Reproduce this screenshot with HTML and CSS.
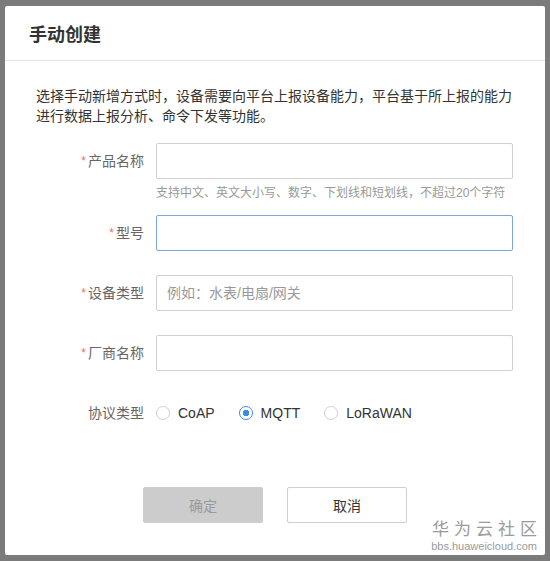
FILE: index.html
```html
<!DOCTYPE html>
<html lang="zh-CN">
<head>
    <meta charset="UTF-8">
    <meta name="viewport" content="width=device-width, initial-scale=1.0">
    <title>手动创建</title>
    <link rel="stylesheet" href="styles.css">
</head>
<body>
    <div class="dialog">
        <div class="dialog-header">
            <h2 class="dialog-title">手动创建</h2>
        </div>

        <div class="dialog-body">
            <p class="dialog-desc">选择手动新增方式时，设备需要向平台上报设备能力，平台基于所上报的能力进行数据上报分析、命令下发等功能。</p>

            <div class="form-item has-hint">
                <label class="form-label"><span class="required">*</span>产品名称</label>
                <div class="form-control">
                    <input class="text-input" type="text">
                    <div class="form-hint">支持中文、英文大小写、数字、下划线和短划线，不超过20个字符</div>
                </div>
            </div>

            <div class="form-item">
                <label class="form-label"><span class="required">*</span>型号</label>
                <div class="form-control">
                    <input class="text-input is-focus" type="text">
                </div>
            </div>

            <div class="form-item">
                <label class="form-label"><span class="required">*</span>设备类型</label>
                <div class="form-control">
                    <input class="text-input" type="text" placeholder="例如：水表/电扇/网关">
                </div>
            </div>

            <div class="form-item">
                <label class="form-label"><span class="required">*</span>厂商名称</label>
                <div class="form-control">
                    <input class="text-input" type="text">
                </div>
            </div>

            <div class="form-item">
                <label class="form-label">协议类型</label>
                <div class="form-control radio-group">
                    <label class="radio"><span class="radio-dot"></span>CoAP</label>
                    <label class="radio checked"><span class="radio-dot"></span>MQTT</label>
                    <label class="radio"><span class="radio-dot"></span>LoRaWAN</label>
                </div>
            </div>
        </div>

        <div class="dialog-footer">
            <button class="btn btn-primary" disabled>确定</button>
            <button class="btn btn-default">取消</button>
        </div>

        <!-- forum watermark -->
        <div class="watermark">
            <div class="watermark-name">华为云社区</div>
            <div class="watermark-url">bbs.huaweicloud.com</div>
        </div>
    </div>
</body>
</html>
```

FILE: styles.css
```css
/* Basic Styles */
body {
    margin: 0;
    padding: 6px 5px;
    background-color: #7b7b7b;
    font-family: "Liberation Sans", "Noto Sans CJK SC", sans-serif;
    font-size: 14px;
    color: #333;
}

/* Dialog */
.dialog {
    position: relative;
    width: 540px;
    height: 549px;
    background-color: #fff;
    border-radius: 2px;
    display: flex;
    flex-direction: column;
}

.dialog-header {
    padding: 18px 24px 14px;
    border-bottom: 1px solid #e6e6e6;
}

.dialog-title {
    margin: 0;
    font-size: 18px;
    line-height: 22px;
    font-weight: bold;
    color: #333;
}

.dialog-body {
    padding: 25px 32px 0 31px;
}

.dialog-desc {
    margin: 0 0 17px;
    line-height: 20px;
    color: #333;
}

/* Form */
.form-item {
    display: flex;
    margin-bottom: 24px;
}

.form-item.has-hint {
    margin-bottom: 12px;
}

.form-label {
    display: block;
    width: 108px;
    height: 36px;
    margin-right: 12px;
    text-align: right;
    line-height: 36px;
    color: #666;
    overflow: hidden;
}

.required {
    color: #e8735f;
    margin-right: 2px;
    font-size: 12px;
    vertical-align: top;
}

.form-control {
    flex: 1;
}

.text-input {
    display: block;
    box-sizing: border-box;
    width: 100%;
    height: 36px;
    padding: 0 10px;
    border: 1px solid #d0d0d0;
    border-radius: 2px;
    font-family: inherit;
    font-size: 14px;
    color: #333;
    outline: none;
}

.text-input::placeholder {
    color: #999;
}

.text-input.is-focus {
    border-color: #7ba6dc;
}

.form-hint {
    margin-top: 4px;
    font-size: 12px;
    line-height: 20px;
    color: #999;
}

/* Radio */
.radio-group {
    display: flex;
    align-items: center;
    gap: 24px;
    height: 36px;
}

.radio {
    display: flex;
    align-items: center;
    gap: 8px;
    color: #333;
}

.radio-dot {
    box-sizing: border-box;
    width: 14px;
    height: 14px;
    border: 1px solid #d0d0d0;
    border-radius: 50%;
    background-color: #fff;
}

.radio.checked .radio-dot {
    border-color: #3f8be0;
    background: radial-gradient(circle, #3f8be0 0 3px, #fff 3.5px);
}

/* Footer buttons */
.dialog-footer {
    margin-top: auto;
    padding-bottom: 32px;
    display: flex;
    justify-content: center;
    gap: 24px;
}

.btn {
    width: 120px;
    height: 36px;
    border-radius: 2px;
    font-family: inherit;
    font-size: 14px;
}

.btn-primary {
    border: 1px solid #cccccc;
    background-color: #cccccc;
    color: #9a9a9a;
}

.btn-default {
    border: 1px solid #cfcfcf;
    background-color: #fff;
    color: #333;
}

/* Watermark */
.watermark {
    position: absolute;
    right: 8px;
    bottom: 2px;
    text-align: right;
    color: #9b9b9b;
}

.watermark-name {
    font-size: 17px;
    line-height: 20px;
    letter-spacing: 5px;
    margin-right: -5px;
}

.watermark-url {
    font-size: 11px;
    line-height: 13px;
}
```
